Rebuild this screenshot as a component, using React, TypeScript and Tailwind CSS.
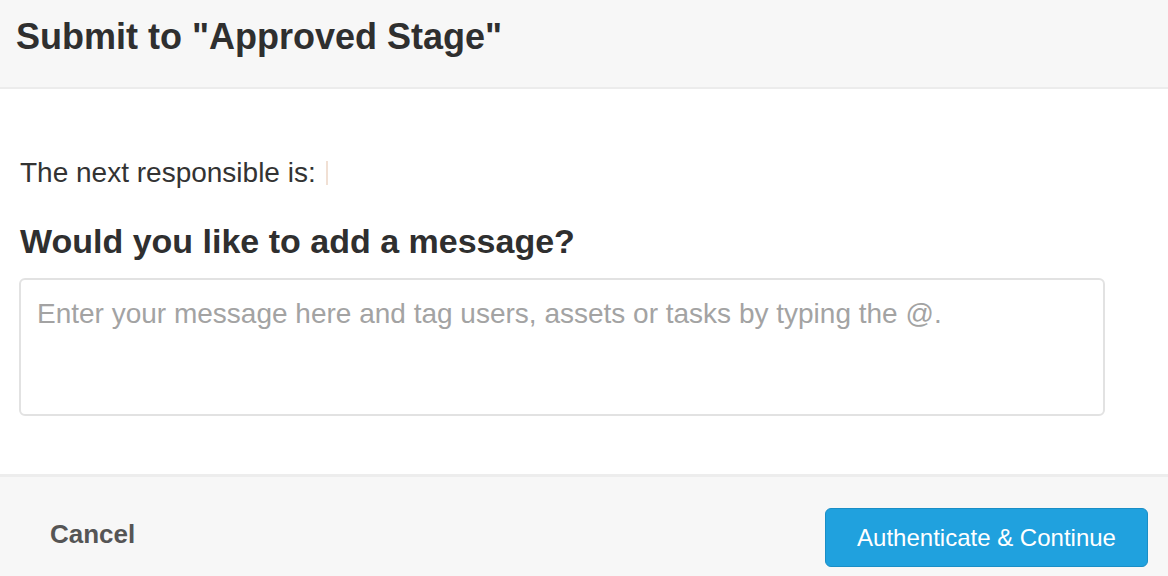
export default function App() {
  return (
    <div
      className="w-[1168px] h-[576px] flex flex-col bg-white text-[#333] overflow-hidden"
      style={{ fontFamily: '"Liberation Sans", Arial, sans-serif' }}
    >
      <div className="h-[89px] shrink-0 bg-[#f7f7f7] border-b-2 border-[#ececec] px-[16px] pt-[17px]">
        <h1 className="text-[36px] leading-[40px] font-bold text-[#2f2f2f]">Submit to "Approved Stage"</h1>
      </div>

      <div className="flex-1 px-[20px] pt-[68px]">
        <p className="text-[28px] leading-[32px] flex items-center">
          The next responsible is:
          <span className="inline-block w-[2px] h-[24px] bg-[#f1e0d4] ml-[10px]" />
        </p>
        <h2 className="mt-[32px] text-[34px] leading-[40px] font-bold text-[#2f2f2f]">
          Would you like to add a message?
        </h2>
        <textarea
          placeholder="Enter your message here and tag users, assets or tasks by typing the @."
          className="mt-[17px] block w-[1086px] h-[138px] -ml-[1px] border-2 border-[#e2e2e2] rounded-[6px] px-[16px] pt-[17px] text-[28px] leading-[34px] text-[#333] placeholder:text-[#a3a3a3] resize-none outline-none"
        />
      </div>

      <div className="h-[102px] shrink-0 bg-[#f7f7f7] border-t-[3px] border-[#ededed] pt-[31px] pl-[50px] pr-[20px] flex items-start justify-between">
        <button className="mt-[11px] text-[26px] leading-[30px] font-bold text-[#555]">Cancel</button>
        <button className="w-[323px] h-[59px] flex items-center justify-center rounded-[6px] bg-[#20a1de] border border-[#1a8ec6] text-white text-[24px]">
          Authenticate &amp; Continue
        </button>
      </div>
    </div>
  );
}
